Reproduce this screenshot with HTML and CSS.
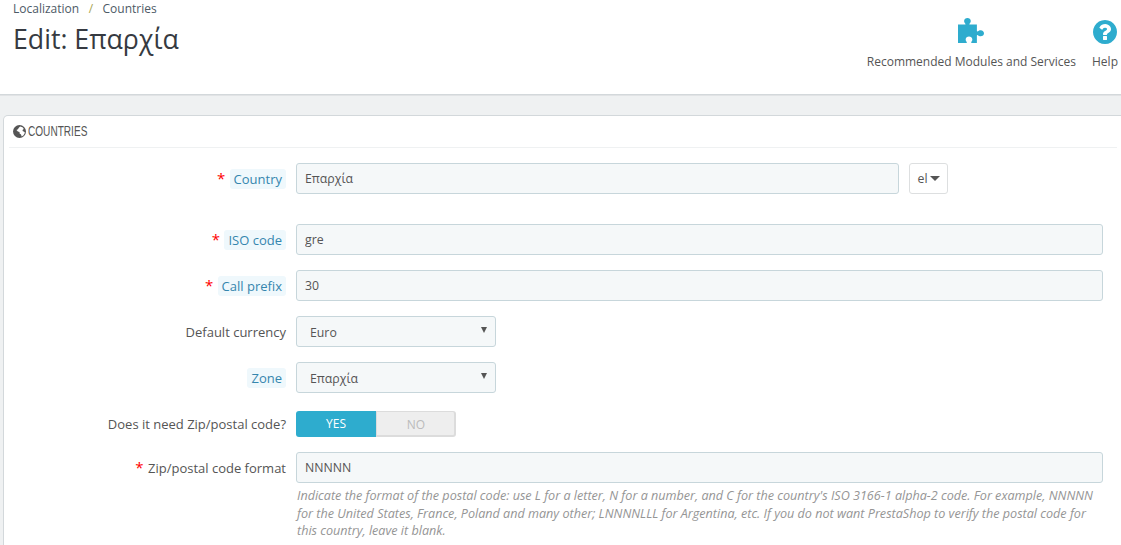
FILE: index.html
```html
<!DOCTYPE html>
<html>
<head>
    <title>Edit: Επαρχία</title>
    <link rel="stylesheet" href="styles.css">
</head>
<body>
    <div class="page-head">
        <div class="head-left">
            <div class="breadcrumb">
                <span>Localization</span>
                <span class="sep">/</span>
                <span>Countries</span>
            </div>
            <h2 class="page-title">Edit: Επαρχία</h2>
        </div>
        <div class="toolbar">
            <a class="tool tool-modules">
                <svg class="tool-icon" viewBox="1 .6 23.4 24.4" preserveAspectRatio="none"><path d="M1 7h6.200c.5 0 .7-.4.4-.9C7 5.300 6.500 4.700 6.500 3.600 6.500 1.800 7.900.6 9.500.6s3 1.200 3 3c0 1.100-.5 1.700-1.100 2.500-.3.500-.1.900.4.900H18v6.200c0 .5.400.7.900.4.800-.6 1.400-1.100 2.500-1.100 1.800 0 3 1.400 3 3s-1.200 3-3 3c-1.100 0-1.700-.5-2.500-1.100-.5-.3-.9-.1-.9.400V25h-4.600c-.6 0-.8-.4-.5-.9.500-.8 1-1.400 1-2.500 0-1.800-1.400-3-3-3s-3 1.200-3 3c0 1.100.5 1.700 1 2.500.3.500.1.900-.5.900H1z"/></svg>
                <span>Recommended Modules and Services</span>
            </a>
            <a class="tool tool-help">
                <svg class="tool-icon" viewBox="0 0 1792 1792"><path d="M1024 1376v-192q0-14-9-23t-23-9h-192q-14 0-23 9t-9 23v192q0 14 9 23t23 9h192q14 0 23-9t9-23zm256-672q0-88-55.500-163t-138.500-116-170-41q-243 0-371 213-15 24 8 42l132 100q7 6 19 6 16 0 25-12 53-68 86-92 34-24 86-24 48 0 85.500 26t37.500 59q0 38-20 61t-68 45q-63 28-115.500 86.500t-52.500 125.500v36q0 14 9 23t23 9h192q14 0 23-9t9-23q0-19 21.500-49.500t54.500-49.500q32-18 49-28.500t46-35 44.500-48 28-60.500 12.500-81zm384 192q0 209-103 385.500t-279.500 279.500-385.500 103-385.500-103-279.500-279.500-103-385.500 103-385.500 279.500-279.500 385.500-103 385.500 103 279.500 279.500 103 385.500z"/></svg>
                <span>Help</span>
            </a>
        </div>
    </div>

    <div class="panel">
        <div class="panel-heading">
            <svg class="globe" viewBox="0 0 12 12">
                <circle cx="6" cy="6" r="6" fill="#555"/>
                <path fill="#fff" d="M6.500 1.300l2.300.7 1.200 1.600-1 .7-.2 1.300 1.500.6.700 1-1.300 2.200-1.700 1.200-.6-1.800-1.300-1-.1-1.300-1.500-.6L3.200 4.700 4.600 4 5.200 2.700z"/>
            </svg>
            <span class="panel-title">COUNTRIES</span>
        </div>
        <form class="form">
            <div class="row row-lang">
                <label class="label"><i class="req">*</i> <span class="hint">Country</span></label>
                <div class="field field-lang">
                    <input class="input" value="Επαρχία">
                    <button type="button" class="lang-btn">el<b class="caret"></b></button>
                </div>
            </div>
            <div class="row">
                <label class="label"><i class="req">*</i> <span class="hint">ISO code</span></label>
                <div class="field"><input class="input" value="gre"></div>
            </div>
            <div class="row">
                <label class="label"><i class="req">*</i> <span class="hint">Call prefix</span></label>
                <div class="field"><input class="input" value="30"></div>
            </div>
            <div class="row">
                <label class="label">Default currency</label>
                <div class="select">Euro<b class="select-arrow"></b></div>
            </div>
            <div class="row">
                <label class="label"><span class="hint">Zone</span></label>
                <div class="select">Επαρχία<b class="select-arrow"></b></div>
            </div>
            <div class="row row-switch">
                <label class="label">Does it need Zip/postal code?</label>
                <div class="switch">
                    <span class="switch-yes">YES</span>
                    <span class="switch-no">NO</span>
                </div>
            </div>
            <div class="row row-zip">
                <label class="label"><i class="req">*</i> Zip/postal code format</label>
                <div class="field">
                    <input class="input" value="NNNNN">
                    <p class="help">Indicate the format of the postal code: use L for a letter, N for a number, and C for the country's ISO 3166-1 alpha-2 code. For example, NNNNN for the United States, France, Poland and many other; LNNNNLLL for Argentina, etc. If you do not want PrestaShop to verify the postal code for this country, leave it blank.</p>
                </div>
            </div>
        </form>
    </div>
</body>
</html>
```

FILE: styles.css
```css
html, body {
    height: 545px;
    overflow: hidden;
}

body {
    margin: 0;
    background: #eff1f2;
    font-family: "Open Sans", sans-serif;
    font-size: 13px;
    color: #555;
}

.page-head {
    display: flex;
    justify-content: space-between;
    height: 95px;
    box-sizing: border-box;
    background: #fff;
    border-bottom: 1px solid #d3d8db;
    padding: 0 2px 0 13px;
    box-shadow: 0 1px 0 #e1e3e5;
}

.breadcrumb {
    display: flex;
    gap: 9px;
    padding-top: 1px;
    font-size: 12px;
    line-height: 15px;
    color: #4d5a66;
}

.sep {
    color: #a8a552;
    margin: 0 .5px;
}

.page-title {
    margin: 5px 0 0;
    font-size: 26.7px;
    line-height: 36px;
    font-weight: 400;
    color: #363a41;
}

.toolbar {
    display: flex;
    gap: 15px;
    padding-top: 18px;
}

.tool {
    display: flex;
    flex-direction: column;
    align-items: center;
    font-size: 12px;
    color: #555;
}

.tool-icon {
    width: 28px;
    height: 28px;
    fill: #2eacce;
    margin-bottom: 7px;
}

.tool-modules .tool-icon {
    width: 26px;
    height: 25px;
    margin-bottom: 10px;
}

.panel {
    margin: 20px -10px 0 3px;
    padding: 0 5px;
    height: 430px;
    box-sizing: border-box;
    background: #fff;
    border: 1px solid #d3d8db;
    border-bottom: 0;
    border-radius: 5px 5px 0 0;
}

.panel-heading {
    display: flex;
    align-items: center;
    gap: 2px;
    height: 31px;
    padding-left: 4px;
    margin-right: 8px;
    border-bottom: 1px solid #eff1f2;
}

.panel-title {
    display: inline-block;
    padding-bottom: 2px;
    font-family: "Liberation Sans", sans-serif;
    font-size: 14px;
    color: #555;
    transform: scaleX(.72);
    transform-origin: left center;
}

.globe {
    width: 13px;
    height: 13px;
}

.form {
    padding-top: 15px;
}

.row {
    display: flex;
    gap: 10px;
    margin-bottom: 15px;
}

.row-lang {
    margin-bottom: 30px;
}

.row-switch {
    margin: 18px 0 15px;
}

.label {
    width: 277px;
    height: 31px;
    flex: none;
    box-sizing: border-box;
    text-align: right;
    line-height: 33px;
    color: #555;
}

.row-switch .label {
    height: 26px;
    line-height: 26px;
}

.req {
    font-style: normal;
    color: #f00;
    font-size: 15px;
    line-height: 1;
    margin-right: 1px;
}

.hint {
    display: inline-block;
    padding: 0 4px;
    line-height: 20px;
    background: #eff8fc;
    border-radius: 3px;
    color: #3586ae;
}

.field {
    width: 807px;
    flex: none;
}

.field-lang {
    display: flex;
    align-items: flex-start;
    gap: 10px;
}

.input {
    display: block;
    width: 100%;
    height: 31px;
    box-sizing: border-box;
    padding: 0 8px;
    background: #f5f8f9;
    border: 1px solid #c7d6db;
    border-radius: 3px;
    font-family: inherit;
    font-size: 12.3px;
    color: #555;
}

.field-lang .input {
    width: 603px;
    flex: none;
}

.lang-btn {
    width: 39px;
    height: 31px;
    padding: 0;
    background: #fff;
    border: 1px solid #dddfe0;
    border-radius: 3px;
    font-family: inherit;
    font-size: 12.3px;
    color: #555;
}

.caret {
    display: inline-block;
    margin-left: 2px;
    vertical-align: 2px;
    border-top: 5px solid #555;
    border-left: 5px solid transparent;
    border-right: 5px solid transparent;
}

.select {
    position: relative;
    width: 200px;
    height: 31px;
    box-sizing: border-box;
    padding-left: 13px;
    background: #f5f8f9;
    border: 1px solid #c7d6db;
    border-radius: 3px;
    line-height: 31px;
    font-size: 12.3px;
    color: #555;
}

.select-arrow {
    position: absolute;
    top: 10px;
    right: 8px;
    border-top: 6px solid #555;
    border-left: 3px solid transparent;
    border-right: 3px solid transparent;
}

.switch {
    display: flex;
    width: 160px;
    height: 26px;
    font-size: 12px;
    line-height: 25px;
    text-align: center;
}

.switch-yes {
    width: 80px;
    background: #2eacce;
    color: #fff;
    border-radius: 3px 0 0 3px;
}

.switch-no {
    width: 80px;
    box-sizing: border-box;
    padding-left: 1px;
    background: #eee;
    color: #bbb;
    border: 1px solid #dcdcdc;
    border-width: 1px 2px 2px 1px;
    border-radius: 0 3px 3px 0;
}

.help {
    margin: 4px 0 0 1px;
    font-size: 12.6px;
    line-height: 17.5px;
    font-style: italic;
    color: #959595;
}
```
